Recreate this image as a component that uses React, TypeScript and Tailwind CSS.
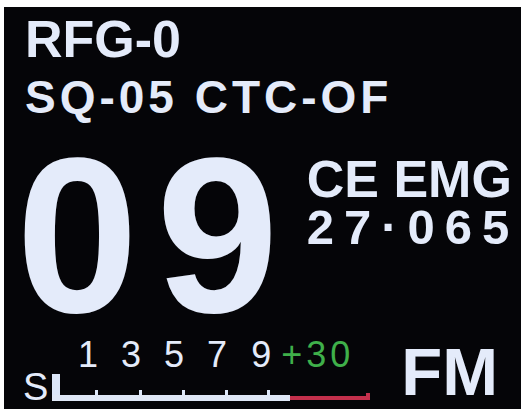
import React from "react";

const txt = "text-[#e4ebfa]";

function Meter() {
  const ticks = [96, 140, 183, 226, 268];
  return (
    <svg width="330" height="34" viewBox="0 0 330 34" className="block">
      <rect x="2" y="3" width="8" height="27" fill="#dce6f8" />
      <rect x="2" y="24" width="238" height="6" fill="#dfe7f6" />
      {ticks.map((t) => (
        <rect key={t} x={t - 50 - 1} y="19" width="3" height="5" fill="#dce6f8" />
      ))}
      <rect x="240" y="25" width="80" height="4" fill="#c4304c" />
      <rect x="316" y="22" width="4" height="7" fill="#c4304c" />
    </svg>
  );
}

export default function App() {
  return (
    <div className="w-[521px] h-[409px] bg-white pt-[7px] pl-[4px] overflow-hidden">
      <div
        className="w-full h-full bg-[#050508] flex flex-col"
        style={{ fontFamily: '"Liberation Sans", Arial, sans-serif' }}
      >
        <div className={`${txt} font-bold text-[52px] leading-none mt-[6px] ml-[21px]`}>RFG-0</div>
        <div className={`${txt} font-bold text-[46px] leading-none mt-[9px] ml-[21px] tracking-[4px]`}>
          SQ-05 CTC-OF
        </div>
        <div className="flex flex-row items-start mt-[33px]">
          <div
            className={`${txt} font-bold text-[220px] leading-[160px] mt-[3px] ml-[12px] tracking-[18px]`}
          >
            09
          </div>
          <div className="flex flex-col ml-[10px]">
            <div className={`${txt} font-bold text-[52px] leading-[48px] mt-[2px]`}>CE EMG</div>
            <div className={`${txt} font-bold text-[49px] leading-[48px] tracking-[10px]`}>27·065</div>
          </div>
        </div>
        <div className="flex flex-row items-start mt-[21px]">
          <div className="flex flex-col">
            <div className="flex flex-row text-[36px] leading-[30px] mt-[3px] ml-[74px]">
              <span className={`${txt} mr-[23px]`}>1</span>
              <span className={`${txt} mr-[23px]`}>3</span>
              <span className={`${txt} mr-[23px]`}>5</span>
              <span className={`${txt} mr-[24px]`}>7</span>
              <span className={`${txt} mr-[10px]`}>9</span>
              <span className="text-[#3fb04a] tracking-[4px]">+30</span>
            </div>
            <div className="flex flex-row items-start mt-[2px] ml-[19px]">
              <span className={`${txt} text-[38px] leading-[30px]`}>S</span>
              <div className="-mt-[1px] ml-[2px]">
                <Meter />
              </div>
            </div>
          </div>
          <div className={`${txt} font-bold text-[67px] leading-none mt-[1px] ml-auto mr-[23px]`}>FM</div>
        </div>
      </div>
    </div>
  );
}
